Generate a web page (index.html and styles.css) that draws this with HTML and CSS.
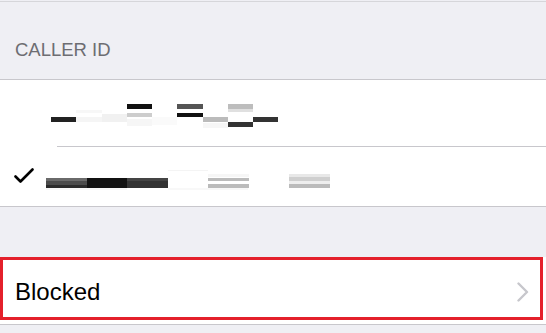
FILE: index.html
```html
<!DOCTYPE html>
<html>
<head>
<meta charset="utf-8">
<link rel="stylesheet" href="styles.css">
</head>
<body>
<div class="topline"></div>
<div class="header">CALLER ID</div>
<div class="group">
  <div class="row row1">
    <svg class="redact1" width="240" height="28" viewBox="0 0 240 28">
      <rect x="5" y="15" width="25" height="5" fill="#222"/>
      <rect x="30" y="8" width="26" height="3" fill="#f7f7f7"/>
      <rect x="30" y="15" width="26" height="5" fill="#f5f5f5"/>
      <rect x="56" y="12" width="25" height="8" fill="#f1f1f1"/>
      <rect x="81" y="2" width="25" height="5" fill="#111"/>
      <rect x="81" y="11" width="25" height="4" fill="#cdcdcd"/>
      <rect x="81" y="17" width="25" height="7" fill="#f6f6f6"/>
      <rect x="106" y="15" width="25" height="8" fill="#fafafa"/>
      <rect x="131" y="2" width="26" height="5" fill="#555"/>
      <rect x="131" y="11" width="26" height="4" fill="#111"/>
      <rect x="157" y="15" width="25" height="5" fill="#bbb"/>
      <rect x="157" y="21" width="25" height="5" fill="#f6f6f6"/>
      <rect x="182" y="2" width="25" height="5" fill="#bdbdbd"/>
      <rect x="182" y="7" width="25" height="3" fill="#e0e0e0"/>
      <rect x="182" y="20" width="25" height="5" fill="#333"/>
      <rect x="207" y="15" width="25" height="5" fill="#333"/>
    </svg>
  </div>
  <div class="sep"></div>
  <div class="row row2">
    <svg class="check" width="20" height="16" viewBox="0 0 20 16">
      <path d="M1.5 8.5 L6.5 13.5 L18.5 1.5" fill="none" stroke="#000" stroke-width="2.6" stroke-linecap="round" stroke-linejoin="round"/>
    </svg>
    <svg class="redact2" width="290" height="20" viewBox="0 0 290 20">
      <rect x="0" y="8" width="41" height="3" fill="#6a6a6a"/>
      <rect x="0" y="11" width="41" height="4" fill="#4a4a4a"/>
      <rect x="0" y="15" width="41" height="3" fill="#2a2a2a"/>
      <rect x="41" y="8" width="40" height="10" fill="#111"/>
      <rect x="81" y="8" width="41" height="3" fill="#444"/>
      <rect x="81" y="11" width="41" height="7" fill="#333"/>
      <rect x="0" y="18" width="81" height="3" fill="#f7f7f7"/>
      <rect x="122" y="-2" width="40" height="3" fill="#f4f4f4"/>
      <rect x="122" y="18" width="80" height="2" fill="#f8f8f8"/>
      <rect x="162" y="4" width="41" height="3" fill="#f6f6f6"/>
      <rect x="162" y="8" width="41" height="3" fill="#bbb"/>
      <rect x="162" y="14" width="41" height="4" fill="#bbb"/>
      <rect x="243" y="4" width="41" height="3" fill="#e8e8e8"/>
      <rect x="243" y="7" width="41" height="4" fill="#cfcfcf"/>
      <rect x="243" y="11" width="41" height="3" fill="#eee"/>
      <rect x="243" y="14" width="41" height="4" fill="#bbb"/>
    </svg>
  </div>
</div>
<div class="cell">
  <span class="label">Blocked</span>
  <svg class="chev" width="12" height="20" viewBox="0 0 12 20">
    <path d="M1.5 1.5 L10 10 L1.5 18.5" fill="none" stroke="#c7c7cc" stroke-width="2.4" stroke-linecap="round" stroke-linejoin="round"/>
  </svg>
  <div class="highlight"></div>
</div>
</body>
</html>
```

FILE: styles.css
```css
html, body {
  margin: 0;
  padding: 0;
  background: #efeff4;
  font-family: "Liberation Sans", Arial, sans-serif;
  width: 546px;
  height: 333px;
  overflow: hidden;
}

.topline {
  margin-top: 1px;
  height: 1px;
  background: #d6d6da;
}

.header {
  box-sizing: border-box;
  height: 77px;
  padding: 37px 0 0 15px;
  font-size: 18.5px;
  line-height: 22px;
  color: #6d6d72;
}

.group {
  background: #fff;
  border-top: 1px solid #c8c7cc;
  border-bottom: 1px solid #c8c7cc;
}

.row {
  display: flex;
  align-items: center;
}

.row1 {
  height: 66px;
  align-items: flex-start;
}

.redact1 {
  display: block;
  margin: 22px 0 0 46px;
}

.sep {
  height: 1px;
  margin-left: 57px;
  background: #c8c7cc;
}

.row2 {
  height: 59px;
  padding-left: 14px;
}

.check {
  display: block;
  flex: none;
  margin-top: -1px;
}

.redact2 {
  display: block;
  align-self: flex-start;
  margin: 23px 0 0 12px;
}

.cell {
  position: relative;
  box-sizing: border-box;
  height: 68px;
  margin-top: 50px;
  background: #fff;
  border-bottom: 1px solid #c8c7cc;
  display: flex;
  align-items: center;
  justify-content: space-between;
  padding: 2px 17px 0 15px;
}

.label {
  font-size: 24px;
  line-height: 28px;
  color: #000;
}

.chev {
  display: block;
  flex: none;
}

.highlight {
  position: absolute;
  left: 0;
  top: 0;
  width: 543px;
  height: 63px;
  box-sizing: border-box;
  border: 3px solid #e4202b;
}
```
